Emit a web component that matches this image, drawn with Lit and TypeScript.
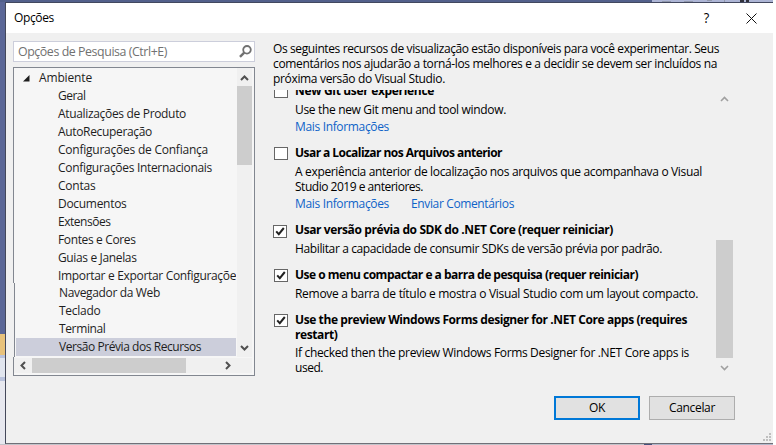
import { LitElement, html, css, svg, nothing } from "lit";
import { customElement, property } from "lit/decorators.js";
import { classMap } from "lit/directives/class-map.js";

/** A single line of text whose tracking is adjusted to fill a given width. */
@customElement("fit-line")
class FitLine extends LitElement {
  @property({ type: Number }) w = 0;
  @property() text = "";
  static styles = css`
    :host { display: block; white-space: nowrap; }
    span { display: inline-block; }
  `;
  updated() {
    const el = this.renderRoot.querySelector("span") as HTMLElement;
    el.style.letterSpacing = "0px";
    const natural = el.getBoundingClientRect().width;
    el.style.letterSpacing = (this.w - natural) / this.text.length + "px";
  }
  render() {
    return html`<span>${this.text}</span>`;
  }
}

type Line = [string, number];
interface Feature {
  checked: boolean;
  title: Line[];
  body: Line[];
  links?: Line[];
  cls: string;
}

const TREE: Line[] = [
  ["Geral", 27.5], ["Atualizações de Produto", 128], ["AutoRecuperação", 94],
  ["Configurações de Confiança", 150], ["Configurações Internacionais", 154],
  ["Contas", 37.5], ["Documentos", 68.5], ["Extensões", 52.5], ["Fontes e Cores", 77.5],
  ["Guias e Janelas", 78.5], ["Importar e Exportar Configurações", 183.5],
  ["Navegador da Web", 101], ["Teclado", 41.5], ["Terminal", 46.5],
  ["Versão Prévia dos Recursos", 142],
];

const INTRO: Line[] = [
  ["Os seguintes recursos de visualização estão disponíveis para você experimentar. Seus", 446],
  ["comentários nos ajudarão a torná-los melhores e a decidir se devem ser incluídos na", 444],
  ["próxima versão do Visual Studio.", 172],
];

const FEATURES: Feature[] = [
  { cls: "f0", checked: false, title: [["New Git user experience", 139]],
    body: [["Use the new Git menu and tool window.", 211]],
    links: [["Mais Informações", 94]] },
  { cls: "f1", checked: false, title: [["Usar a Localizar nos Arquivos anterior", 207]],
    body: [["A experiência anterior de localização nos arquivos que acompanhava o Visual", 407], ["Studio 2019 e anteriores.", 128]],
    links: [["Mais Informações", 94], ["Enviar Comentários", 103]] },
  { cls: "f2", checked: true, title: [["Usar versão prévia do SDK do .NET Core (requer reiniciar)", 318]],
    body: [["Habilitar a capacidade de consumir SDKs de versão prévia por padrão.", 367]] },
  { cls: "f3", checked: true, title: [["Use o menu compactar e a barra de pesquisa (requer reiniciar)", 343]],
    body: [["Remove a barra de título e mostra o Visual Studio com um layout compacto.", 403]] },
  { cls: "f4", checked: true, title: [["Use the preview Windows Forms designer for .NET Core apps (requires", 392], ["restart)", 42.5]],
    body: [["If checked then the preview Windows Forms Designer for .NET Core apps is", 394], ["used.", 28]] },
];

const ARROWS: Record<string, string> = {
  up: "M1 6L4.5 2.5L8 6", down: "M1 3L4.5 6.5L8 3",
  left: "M6 1L2.5 4.5L6 8", right: "M3 1L6.5 4.5L3 8",
};
const arrow = (dir: string, cls = "") => html`
  <svg class="arrow ${cls}" width="9" height="9" viewBox="0 0 9 9">${svg`<path d=${ARROWS[dir]} />`}</svg>`;
const line = ([text, w]: Line) => html`<fit-line .text=${text} .w=${w}></fit-line>`;

@customElement("app-root")
class AppRoot extends LitElement {
  static styles = css`
    * { box-sizing: border-box; }
    :host {
      display: grid; grid-template-columns: 5px 768px; grid-template-rows: 2px 442px 1px;
      width: 776px; height: 445px; overflow: hidden; background: #fff;
      font: 12px/15px "Open Sans", "Noto Sans", sans-serif; font-stretch: 93%; color: #000;
    }
    .top { grid-column: 1 / 3; display: flex; background: #52608b; }
    .top i { margin-left: 652px; width: 121px; background: #adb5d5; display: flex; }
    .top svg { display: block; }
    .under { grid-column: 1 / 3; background: linear-gradient(90deg, #c3c4ca 644px, #46507c 644px 652px, #b4b9cc 652px); }
    .side { background: linear-gradient(#5b6797 0 332px, #e8c27b 332px 353px, #b9c2dc 353px 356px, #e1e5ee 356px 375px, #b9c2dc 375px 379px, #e7e8ef 379px); }
    .dialog {
      display: grid; grid-template-rows: 30px 1fr; background: #f0f0f0;
      border: 1px solid #707078; border-top-color: #42485f; border-left-color: #44485a; border-right: 0;
    }
    .bar { background: #fff; display: flex; align-items: center; padding-left: 8px; }
    .bar fit-line { flex: 1; padding-bottom: 2px; }
    .bar svg { fill: none; stroke: #111; }
    .q { font-size: 15px; width: 9px; margin-right: 35px; padding-bottom: 2px; text-align: center; transform: scaleX(.85); }
    .close { margin-right: 16px; }
    .main { display: grid; grid-template-columns: 242px 1fr; column-gap: 18px; padding: 8px 0 0 7px; }
    .search {
      height: 21px; border: 1px solid #cccedb; background: #fff; color: #717171;
      display: flex; align-items: center; justify-content: space-between; padding: 0 2px 0 4px;
      font-size: 12.4px;
    }
    .tree {
      margin-top: 5px; height: 309px; border: 1px solid #828790; background: #f6f6f6;
      display: grid; grid-template-columns: 222px 1px 15px 1fr; grid-template-rows: 289px 1px 15px 1fr; padding: 0;
      position: relative;
    }
    .jog { position: absolute; left: -1px; top: 215px; width: 2px; height: 74px; background: #f0f0f0; border-right: 1px solid #828790; }
    .rows { overflow: hidden; padding: 1px 0 0 2px; color: #1e1e1e; }
    .row { height: 18px; line-height: 18px; padding-left: 42px; display: flex; align-items: center; }
    .row.head { padding-left: 7px; gap: 9px; }
    .row.late { padding-left: 43px; }
    .row.tight { margin-top: -1px; }
    .row.sel { background: #cccedb; }
    .vs { grid-column: 3; background: #f0f0f0; display: flex; flex-direction: column; align-items: center; padding: 6px 0 5px; }
    .vs .thumb { width: 15px; height: 79px; margin: 3px 0 auto; background: #cdcdcd; }
    .hs { grid-row: 3; grid-column: 1 / 4; background: #f0f0f0; display: flex; align-items: center; padding: 0 20px 0 5px; }
    .hs .thumb { width: 154px; height: 15px; margin: 0 auto 0 4px; background: #cdcdcd; }
    .arrow { flex: none; fill: none; stroke: #505050; stroke-width: 2; }
    .arrow.dim { stroke: #a0a0a0; stroke-width: 1.6; }
    .right { padding-top: 0; }
    .area { display: grid; grid-template-columns: 443px 17px; height: 284px; margin-top: 4px; }
    .list { overflow: hidden; }
    .feature { display: grid; grid-template-columns: 22px 1fr; align-content: start; }
    .f0 { margin-top: -7px; height: 62px; }
    .f1 { height: 77px; }
    .f2, .f3 { height: 45px; }
    .box { width: 14px; height: 13px; margin: 2px 0 0 1px; border: 1px solid #666; background: #fff; display: block; }
    .box svg { display: block; fill: none; stroke: #222; stroke-width: 2; }
    .f2 .box { margin: 3px 0 0 0; }
    .title { font-weight: 700; }
    .body { margin-top: 4px; }
    .f4 .body { margin-top: 3px; }
    .links { display: flex; gap: 22px; color: #0e63c8; margin-top: 2px; }
    .ps { display: flex; flex-direction: column; align-items: center; padding: 5px 0 2px; }
    .ps .thumb { width: 17px; height: 118px; margin: auto 0 5px; background: #cdcdcd; }
    .buttons { display: flex; gap: 9px; margin: 22px 0 0 281px; }
    button {
      all: unset; box-sizing: border-box; width: 86px; height: 24px; background: #e1e1e1; border: 1px solid #adadad;
      display: flex; align-items: center; justify-content: center; padding-bottom: 2px;
    }
    button.ok { border: 2px solid #0078d7; }
    .grip { position: absolute; left: 763px; top: 433px; fill: #bfbfbf; }
  `;

  render() {
    return html`
      <div class="top"><i><svg width="121" height="2" viewBox="0 0 121 2">
        <path fill="#9299ad" d="M10 1h9v1h-9zM32 1h9v1h-9zM55 0h5v1h-5zM72 0h1v2h-1z"/>
        <path fill="#30323c" d="M88 0h4v2h-4zM94 0h3v2h-3z"/></svg></i></div>
      <div class="side"></div>
      <div class="dialog">
        <div class="bar">
          ${line(["Opções", 40])}
          <span class="q">?</span>
          <svg class="close" width="11" height="11" viewBox="0 0 11 11"><path d="M.5 .5L10.5 10.5M10.5 .5L.5 10.5"/></svg>
        </div>
        <div class="main">
          <div>
            <div class="search">
              ${line(["Opções de Pesquisa (Ctrl+E)", 149])}
              <svg width="13" height="13" viewBox="0 0 13 13" fill="none" stroke="#717171">
                <circle cx="8" cy="4.8" r="3.8" stroke-width="1.8"/><path d="M5.2 7.6L1 11.8" stroke-width="2.4"/></svg>
            </div>
            <div class="tree">
              <div class="rows">
                <div class="row head">
                  <svg width="7" height="7" viewBox="0 0 7 7"><path d="M6.5 0V6.5H0Z" fill="#1e1e1e"/></svg>
                  ${line(["Ambiente", 53])}
                </div>
                ${TREE.map((t, i) => html`<div class=${classMap({ row: true, late: i > 10, tight: i === 11, sel: i === 14 })}>${line(t)}</div>`)}
              </div>
              <div class="vs">${arrow("up")}<div class="thumb"></div>${arrow("down")}</div>
              <div class="hs">${arrow("left")}<div class="thumb"></div>${arrow("right")}</div>
              <div class="jog"></div>
            </div>
          </div>
          <div class="right">
            ${INTRO.map(line)}
            <div class="area">
              <div class="list">${FEATURES.map((f) => html`
                <div class="feature ${f.cls}">
                  <span class="box">${f.checked ? html`<svg width="12" height="11" viewBox="0 0 12 11"><path d="M2.2 5.4L4.8 8.2L9.8 2"/></svg>` : nothing}</span>
                  <div>
                    <div class="title">${f.title.map(line)}</div>
                    <div class="body">${f.body.map(line)}</div>
                    ${f.links ? html`<div class="links">${f.links.map(line)}</div>` : nothing}
                  </div>
                </div>`)}
              </div>
              <div class="ps">${arrow("up", "dim")}<div class="thumb"></div>${arrow("down", "dim")}</div>
            </div>
            <div class="buttons">
              <button class="ok">${line(["OK", 16])}</button>
              <button>${line(["Cancelar", 46])}</button>
            </div>
          </div>
        </div>
      </div>
      <div class="under"></div>
      <svg class="grip" width="8" height="8" viewBox="0 0 8 8"><path d="M6 0h2v2H6zM3 3h2v2H3zM6 3h2v2H6zM0 6h2v2H0zM3 6h2v2H3zM6 6h2v2H6z"/></svg>
    `;
  }
}
